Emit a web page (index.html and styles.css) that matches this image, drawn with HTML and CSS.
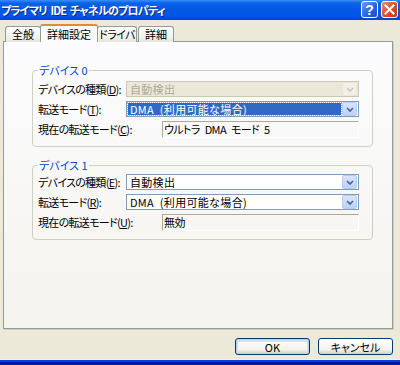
FILE: index.html
```html
<!DOCTYPE html>
<html lang="ja">

<head>
    <meta charset="UTF-8">
    <title>プライマリ IDE チャネルのプロパティ</title>
    <link rel="stylesheet" href="styles.css">
</head>

<body>
    <div class="window">
        <div class="titlebar">
            <span class="title">プライマリ IDE チャネルのプロパティ</span>
            <div class="caption-buttons">
                <span class="cap-btn help">?</span>
                <span class="cap-btn close">
                    <svg width="11" height="11" viewBox="0 0 11 11">
                        <path d="M1.5 1.5 L9.5 9.5 M9.5 1.5 L1.5 9.5" stroke="#fff" stroke-width="2" stroke-linecap="square" />
                    </svg>
                </span>
            </div>
        </div>

        <div class="client">
            <div class="tabs">
                <span class="tab">全般</span>
                <span class="tab active">詳細設定</span>
                <span class="tab tight">ドライバ</span>
                <span class="tab">詳細</span>
            </div>

            <div class="panel">
                <!-- Device 0 -->
                <fieldset class="group">
                    <legend>デバイス 0</legend>
                    <div class="row">
                        <span class="label">デバイスの種類(<u>D</u>):</span>
                        <div class="combo disabled">
                            <span class="combo-text">自動検出</span>
                            <span class="drop">
                                <svg width="8" height="5" viewBox="0 0 8 5"><path d="M1 1 L4 4 L7 1" fill="none" stroke="currentColor" stroke-width="1.6" /></svg>
                            </span>
                        </div>
                    </div>
                    <div class="row">
                        <span class="label">転送モード(<u>T</u>):</span>
                        <div class="combo">
                            <span class="combo-text selected">DMA (利用可能な場合)</span>
                            <span class="drop">
                                <svg width="8" height="5" viewBox="0 0 8 5"><path d="M1 1 L4 4 L7 1" fill="none" stroke="currentColor" stroke-width="1.6" /></svg>
                            </span>
                        </div>
                    </div>
                    <div class="row">
                        <span class="label wide">現在の転送モード(<u>C</u>):</span>
                        <div class="static">ウルトラ DMA モード 5</div>
                    </div>
                </fieldset>

                <!-- Device 1 -->
                <fieldset class="group second">
                    <legend>デバイス 1</legend>
                    <div class="row">
                        <span class="label">デバイスの種類(<u>E</u>):</span>
                        <div class="combo">
                            <span class="combo-text">自動検出</span>
                            <span class="drop">
                                <svg width="8" height="5" viewBox="0 0 8 5"><path d="M1 1 L4 4 L7 1" fill="none" stroke="currentColor" stroke-width="1.6" /></svg>
                            </span>
                        </div>
                    </div>
                    <div class="row">
                        <span class="label">転送モード(<u>R</u>):</span>
                        <div class="combo">
                            <span class="combo-text">DMA (利用可能な場合)</span>
                            <span class="drop">
                                <svg width="8" height="5" viewBox="0 0 8 5"><path d="M1 1 L4 4 L7 1" fill="none" stroke="currentColor" stroke-width="1.6" /></svg>
                            </span>
                        </div>
                    </div>
                    <div class="row">
                        <span class="label wide">現在の転送モード(<u>U</u>):</span>
                        <div class="static">無効</div>
                    </div>
                </fieldset>
            </div>

            <div class="buttons">
                <button class="btn default">OK</button>
                <button class="btn">キャンセル</button>
            </div>
        </div>

        <div class="frame-bottom"></div>
    </div>
</body>

</html>
```

FILE: styles.css
```css
body {
    margin: 0;
    font-family: "Noto Sans CJK JP", "Liberation Sans", sans-serif;
    font-size: 11px;
    font-feature-settings: "palt";
    color: #000;
    background: #ece9d8;
}

.window {
    width: 400px;
    height: 365px;
    display: flex;
    flex-direction: column;
    overflow: hidden;
}

/* title bar */
.titlebar {
    height: 20px;
    display: flex;
    align-items: center;
    justify-content: space-between;
    background: linear-gradient(#3d8efa 0, #0b62ea 3px, #0359e4 50%, #0055e6 80%, #0041cf 100%);
}

.title {
    padding-left: 1px;
    color: #fff;
    font-weight: bold;
    font-size: 11px;
    letter-spacing: -0.8px;
    word-spacing: 2px;
    line-height: 20px;
    text-shadow: 1px 1px 0 #0a2b8c;
    white-space: nowrap;
}

.caption-buttons {
    display: flex;
    gap: 3px;
    padding-right: 2px;
    align-self: flex-start;
    padding-top: 1px;
}

.cap-btn {
    width: 15px;
    height: 15px;
    border: 1px solid #fff;
    border-radius: 3px;
    display: flex;
    align-items: center;
    justify-content: center;
    color: #fff;
    font-family: "Liberation Sans", sans-serif;
    font-weight: bold;
    font-size: 14px;
}

.help {
    background: linear-gradient(135deg, #6f9cf8, #2a5fe0 60%, #1d4fd0);
}

.close {
    background: linear-gradient(135deg, #ef8c6c, #d8502b 55%, #c23c14);
}

/* client area */
.client {
    flex: 1;
    display: flex;
    flex-direction: column;
    padding: 5px 7px 0 3px;
}

.tabs {
    display: flex;
    align-items: flex-end;
    height: 17px;
    padding-left: 2px;
    margin-bottom: -1px;
    position: relative;
    z-index: 1;
}

.tab {
    height: 15px;
    padding: 0 6px;
    line-height: 15px;
    border: 1px solid #919b9c;
    border-bottom: none;
    border-radius: 3px 3px 0 0;
    background: linear-gradient(#fefefe, #f1f0ea 70%, #e6e4db);
    margin-right: 1px;
    white-space: nowrap;
}

.tab.tight {
    padding: 0 1px;
    letter-spacing: -0.5px;
}

.tab.active {
    padding: 0 6px;
    margin: 0 -1px 0 -2px;
    border-top: 2px solid #e68b2c;
    background: #fcfcfe;
    line-height: 16px;
    height: 16px;
}

.panel {
    height: 286px;
    border: 1px solid #919b9c;
    background: linear-gradient(#fcfcfe, #f4f3ee);
    box-shadow: 1px 1px 0 #d0cebf;
    padding: 0 19px 0 28px;
}

/* group boxes */
.group {
    margin: 21px 0 0;
    padding: 4px 13px 9px 5px;
    border: 1px solid #d0d0bf;
    border-radius: 4px;
    min-inline-size: 0;
}

.group.second {
    margin-top: 11px;
    padding-top: 2px;
}

.group legend {
    padding: 0 1px;
    margin-left: 0;
    color: #0046d5;
    line-height: 14px;
}

.row {
    display: flex;
    align-items: center;
    height: 16px;
    margin-bottom: 4px;
}

.row:last-child {
    margin-bottom: 0;
}

.label {
    width: 88px;
    flex: none;
    white-space: nowrap;
    letter-spacing: -0.7px;
}

.label.wide {
    width: 124px;
}

.combo {
    flex: 1;
    height: 14px;
    border: 1px solid #7f9db9;
    background: #fff;
    display: flex;
    align-items: center;
    padding: 0 1px;
}

.combo-text {
    flex: 1;
    height: 12px;
    line-height: 12px;
    padding: 0 2px;
    margin-right: 1px;
    white-space: nowrap;
    font-feature-settings: normal;
    word-spacing: 3px;
    letter-spacing: 0.3px;
}

.combo-text.selected {
    background: #316ac5;
    color: #fff;
    outline: 1px dotted #c8b060;
}

.drop {
    width: 13px;
    height: 12px;
    border: 1px solid #b7cbf5;
    border-radius: 2px;
    background: linear-gradient(#d9e5fd, #bcd0fa);
    color: #4d6185;
    display: flex;
    align-items: center;
    justify-content: center;
}

.combo.disabled {
    border-color: #c9c7ba;
    background: #ebe8d9;
}

.combo.disabled .combo-text {
    color: #aca899;
}

.combo.disabled .drop {
    border-color: #e8e6dd;
    background: #f1efe6;
    color: #c9c7ba;
}

.static {
    flex: 1;
    height: 15px;
    line-height: 15px;
    padding-left: 1px;
    border-top: 1px solid #aca899;
    border-left: 1px solid #aca899;
    border-right: 1px solid #fff;
    border-bottom: 1px solid #fff;
    white-space: nowrap;
    letter-spacing: -0.6px;
    word-spacing: 3px;
}

/* dialog buttons */
.buttons {
    display: flex;
    justify-content: flex-end;
    gap: 8px;
    margin-top: 9px;
}

.btn {
    width: 75px;
    height: 17px;
    padding: 0;
    font: inherit;
    line-height: 14px;
    border: 1px solid #003c74;
    border-radius: 3px;
    background: linear-gradient(#ffffff, #f3f2ec 70%, #d6d0c5);
    color: #000;
}

.btn.default {
    box-shadow: inset 0 0 0 1px #b4cff3, inset 0 1px 0 2px #cfe2fb;
}

.frame-bottom {
    height: 6px;
    background: linear-gradient(#f6f2dc 0 1px, #0a3ce0 1px 3px, #001a9a 3px);
}
```
